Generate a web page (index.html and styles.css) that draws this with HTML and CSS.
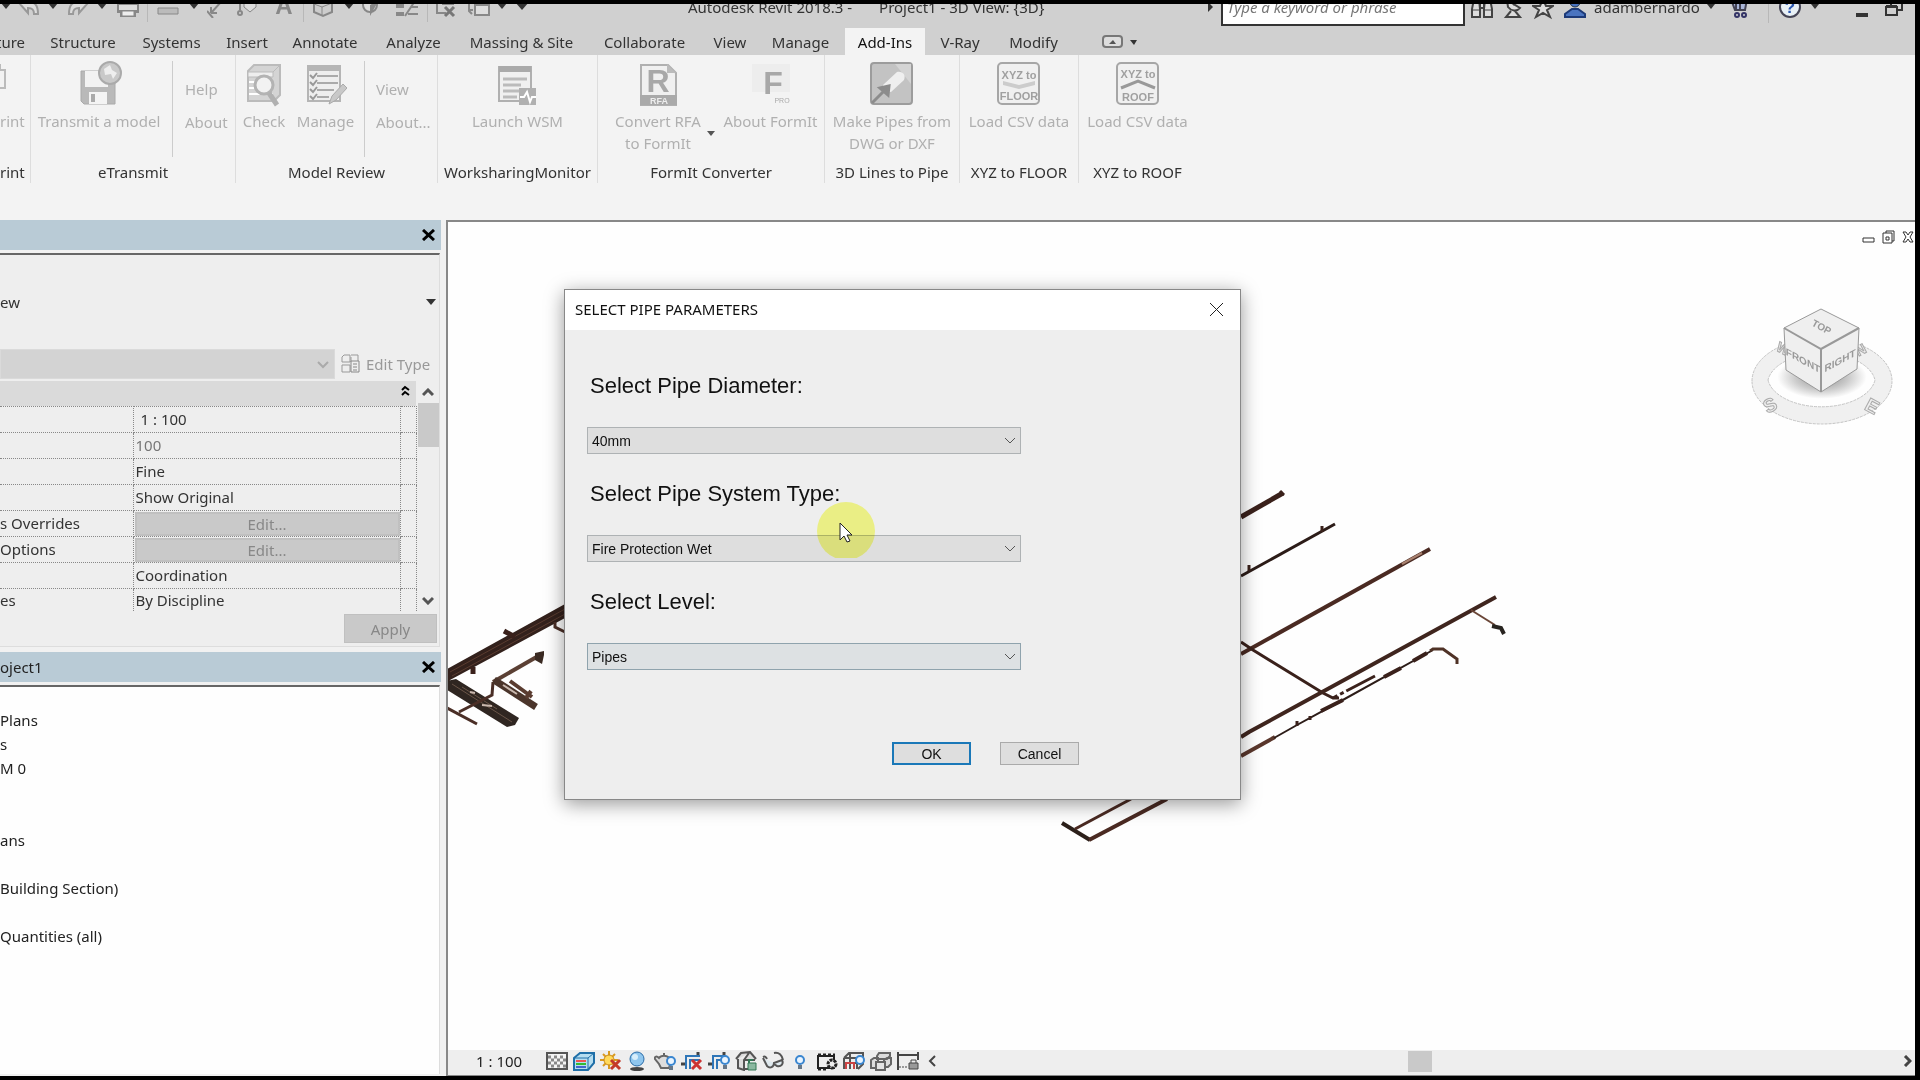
FILE: index.html
```html
<!DOCTYPE html>
<html lang="en">
<head>
<meta charset="utf-8">
<title>Autodesk Revit 2018.3 - Project1 - 3D View: {3D}</title>
<link rel="stylesheet" href="styles.css">
</head>
<body>
<div class="app">
  <header class="titlebar">
    <div class="qat">
      <button aria-label="Save options"><svg width="10" height="6"><path d="M0 0h10L5 6z" fill="#333"/></svg></button>
      <button aria-label="Undo"><svg width="22" height="20"><path d="M2 8l8-7v5c7 0 10 3 10 12h-4c0-5-2-6-6-6v5z" class="qi"/></svg></button>
      <button aria-label="Undo list"><svg width="10" height="6"><path d="M0 0h10L5 6z" fill="#333"/></svg></button>
      <button aria-label="Redo"><svg width="22" height="20"><path d="M20 8l-8-7v5c-7 0-10 3-10 12h4c0-5 2-6 6-6v5z" class="qi"/></svg></button>
      <button aria-label="Redo list"><svg width="10" height="6"><path d="M0 0h10L5 6z" fill="#333"/></svg></button>
      <button aria-label="Print"><svg width="24" height="22"><path d="M5 9V1h14v8M2 9h20v8h-3v4H5v-4H2z" fill="#ddd" stroke="#888" stroke-width="2"/><path d="M2 15h20v3H2z" fill="#888"/><path d="M6 16h12v5H6z" fill="#eee" stroke="#888"/></svg></button>
      <i class="rule"></i>
      <button aria-label="Measure"><svg width="22" height="22"><path d="M3 4h16M3 1v6M19 1v6" stroke="#888" fill="none"/><path d="M1 13h20v6H1z" fill="#bbb" stroke="#888"/></svg></button>
      <button aria-label="Measure options"><svg width="10" height="6"><path d="M0 0h10L5 6z" fill="#333"/></svg></button>
      <button aria-label="Aligned dimension"><svg width="16" height="24"><path d="M14 8L4 19M4 19v-6M4 19h6M0 17l6 7" stroke="#888" stroke-width="2" fill="none"/></svg></button>
      <button aria-label="Tag"><svg width="20" height="24"><path d="M3 8v8M3 4h5" stroke="#888" stroke-width="2"/><circle cx="3" cy="19" r="2" fill="none" stroke="#888" stroke-width="2"/><path d="M7 3h12v10l-6 5-6-5z" fill="#ddd" stroke="#888"/></svg></button>
      <button aria-label="Text" class="letter">A</button>
      <i class="rule"></i>
      <button aria-label="Default 3D view"><svg width="20" height="24"><path d="M1 9l9-6 9 6v9l-9 4-9-4z" fill="#ccc" stroke="#888" stroke-width="2"/><path d="M1 10l8 3v9M9 13l10-4" stroke="#888" fill="none"/></svg></button>
      <button aria-label="View options"><svg width="10" height="6"><path d="M0 0h10L5 6z" fill="#333"/></svg></button>
      <button aria-label="Section"><svg width="20" height="24"><circle cx="9" cy="11" r="7" fill="#ddd" stroke="#888" stroke-width="2"/><path d="M9 22V11l9-5z" fill="#888"/></svg></button>
      <button aria-label="Thin lines"><svg width="24" height="24"><path d="M1 10h8v4H1zM1 18h8v4H1z" fill="#888"/><path d="M10 22L20 7M16 13h7M13 20h10" stroke="#888" stroke-width="2"/></svg></button>
      <i class="rule"></i>
      <button aria-label="Close hidden windows"><svg width="22" height="24"><path d="M1 5h14M3 5v14h9M8 10h12" stroke="#888" stroke-width="2" fill="none"/><path d="M11 13l9 9M20 13l-9 9" stroke="#777" stroke-width="3"/></svg></button>
      <button aria-label="Switch windows"><svg width="24" height="24"><path d="M8 11h14v10H8z" fill="#ddd" stroke="#888" stroke-width="2"/><path d="M2 6v11l3 3M1 16h5" stroke="#888" stroke-width="2" fill="none"/></svg></button>
      <button aria-label="Window list"><svg width="10" height="6"><path d="M0 0h10L5 6z" fill="#333"/></svg></button>
      <button aria-label="Customize"><svg width="14" height="8"><path d="M0 0h14L7 8z" fill="#333"/></svg></button>
    </div>
    <div class="doc-title"><span>Autodesk Revit 2018.3 -</span><span>Project1 - 3D View: {3D}</span></div>
    <div class="infocenter">
      <svg width="6" height="10"><path d="M0 0v10l5-5z" fill="#333"/></svg>
      <input class="search" type="text" aria-label="Search" placeholder="Type a keyword or phrase">
      <button aria-label="Find"><svg width="24" height="26"><path d="M2 23v-8l2-10h5l1 10v8zM14 23v-8l1-10h5l2 10v8zM10 9h4v5h-4z" fill="#ddd" stroke="#444" stroke-width="2"/><path d="M3 16h6M15 16h6" stroke="#444"/></svg></button>
      <button aria-label="Subscription"><svg width="20" height="26"><path d="M4 6l13 8c-3 4-9 3-12-1zM10 11L15 5M8 17l-5 6h14l-5-6" fill="#ddd" stroke="#444" stroke-width="2"/></svg></button>
      <button aria-label="Favorites"><svg width="22" height="26"><path d="M11 5l3 7h7l-6 4 3 7-7-4-7 4 3-7-6-4h7z" fill="#ddd" stroke="#444" stroke-width="2"/></svg></button>
      <button class="user"><svg width="24" height="26"><circle cx="12" cy="8" r="5" fill="#4a74c0" stroke="#234"/><path d="M2 23v-3l7-5h6l7 5v3z" fill="#4a74c0" stroke="#1d3a78" stroke-width="2"/></svg>adambernardo<svg width="8" height="5"><path d="M0 0h8L4 5z" fill="#333"/></svg></button>
      <button aria-label="App store" class="cart"><svg width="20" height="26"><path d="M19 5h-3l-2 11H4L1 8h14M5 8v8M9 8v8" fill="#aab6d8" stroke="#445" stroke-width="2"/><circle cx="6" cy="21" r="2" fill="none" stroke="#336" stroke-width="2"/><circle cx="13" cy="21" r="2" fill="none" stroke="#336" stroke-width="2"/></svg></button>
      <i class="rule"></i>
      <button aria-label="Help" class="help"><svg width="24" height="24"><circle cx="12" cy="12" r="10" fill="#e8f0f6" stroke="#445" stroke-width="2"/><text x="12" y="18" text-anchor="middle" class="q">?</text></svg></button>
      <button aria-label="Help options"><svg width="8" height="5"><path d="M0 0h8L4 5z" fill="#333"/></svg></button>
      <button aria-label="Minimize" class="min"><svg width="12" height="20"><path d="M0 16h12v4H0z" fill="#333"/></svg></button>
      <button aria-label="Restore"><svg width="18" height="20"><path d="M1 10h11v8H1zM1 9h11M6 8V5h11v8h-4" fill="none" stroke="#333" stroke-width="2"/></svg></button>
    </div>
  </header>

  <nav class="tabs">
    <a href="#" class="cut">ture</a><a href="#">Structure</a><a href="#">Systems</a><a href="#">Insert</a><a href="#">Annotate</a><a href="#">Analyze</a><a href="#">Massing &amp; Site</a><a href="#">Collaborate</a><a href="#">View</a><a href="#">Manage</a><a href="#" class="active">Add-Ins</a><a href="#">V-Ray</a><a href="#">Modify</a>
    <button aria-label="Collapse ribbon"><svg width="36" height="14"><rect x="1" y="1" width="19" height="11" rx="3" fill="#ddd" stroke="#777" stroke-width="2"/><path d="M7 9h7l-3-4z" fill="#555"/><path d="M28 5h7l-3 5z" fill="#333"/></svg></button>
  </nav>

  <section class="ribbon">
    <div class="panel edge"><div class="tools"><button class="tool" disabled><svg width="24" height="46"><path d="M-12 9h17v18H-12M-8 9V4h8v5" fill="#f2f2f2" stroke="#bbb" stroke-width="2"/></svg><span>rint</span></button></div><h2>rint</h2></div>

    <div class="panel"><div class="tools etransmit">
      <button class="tool" disabled><svg width="46" height="46"><path d="M5 10h34v33H8l-3-3z" fill="#b9b9b9" stroke="#aaa"/><path d="M9 10h23v16H9z" fill="#f2f2f2"/><path d="M13 31h18v12H13z" fill="#f4f4f4"/><path d="M15 33h4v8h-4z" fill="#aaa"/><circle cx="34" cy="12" r="11" fill="#c9c9c9" stroke="#aaa" stroke-width="2"/><path d="M28 8l6-4 2 5 5 3-4 6-2-5-6 1z" fill="#eee"/></svg><span>Transmit a model</span></button>
      <i class="split"></i><div class="stack"><button disabled>Help</button><button disabled>About</button></div>
    </div><h2>eTransmit</h2></div>

    <div class="panel"><div class="tools review">
      <button class="tool" disabled><svg width="36" height="46"><path d="M2 10l6-6h26v30l-6 6H2z" fill="#d4d4d4" stroke="#bbb" stroke-width="2"/><path d="M2 11h25v5H2zM27 11l6-6" fill="#eee" stroke="#bbb"/><path d="M3 21h24M3 27h24M3 33h24" stroke="#fff" stroke-width="2"/><circle cx="18" cy="24" r="9" fill="#f2f2f2" stroke="#b3b3b3" stroke-width="3"/><path d="M23 32l8 12" stroke="#b0b0b0" stroke-width="5"/></svg><span>Check</span></button>
      <button class="tool" disabled><svg width="42" height="46"><path d="M3 5h32v35H3z" fill="#eee" stroke="#b5b5b5" stroke-width="2"/><path d="M3 4h32v6H3z" fill="#b5b5b5"/><path d="M12 15h21M12 22h21M12 29h17M12 36h12" stroke="#aaa" stroke-width="2"/><path d="M5 14l3 3 4-5M5 21l3 3 4-5M5 28l3 3 4-5M5 35l3 3 4-5" stroke="#999" stroke-width="2" fill="none"/><path d="M24 43l3-8 11-12 4 4-11 12z" fill="#c8c8c8" stroke="#aaa"/></svg><span>Manage</span></button>
      <i class="split"></i><div class="stack"><button disabled>View</button><button disabled>About...</button></div>
    </div><h2>Model Review</h2></div>

    <div class="panel"><div class="tools">
      <button class="tool" disabled><svg width="40" height="46"><path d="M2 6h32v34H2z" fill="#f0f0f0" stroke="#b0b0b0" stroke-width="2"/><path d="M2 5h32v6H2z" fill="#aaa"/><path d="M6 18h24M6 24h18M6 30h21M6 36h14" stroke="#bbb" stroke-width="3"/><path d="M22 27h17v17H22z" fill="#b0b0b0"/><path d="M23 36h4l3-5 3 10 2-5h4" stroke="#fff" stroke-width="2" fill="none"/></svg><span>Launch WSM</span></button>
    </div><h2>WorksharingMonitor</h2></div>

    <div class="panel"><div class="tools formit">
      <button class="tool" disabled><svg width="38" height="46"><path d="M2 4h27l8 8v32H2z" fill="#f0f0f0" stroke="#b0b0b0" stroke-width="2"/><path d="M28 3v9h9z" fill="#bbb"/><path d="M1 34h37v10H1z" fill="#aaa"/><text x="19" y="31" text-anchor="middle" class="big">R</text><text x="20" y="43" text-anchor="middle" class="tag">RFA</text></svg><span>Convert RFA<br>to FormIt</span></button>
      <svg class="drop" width="8" height="5"><path d="M0 0h8L4 5z" fill="#555"/></svg>
      <button class="tool" disabled><svg width="40" height="46"><path d="M1 3h38v28H1z" fill="#ededed"/><text x="22" y="33" text-anchor="middle" class="big">F</text><text x="31" y="42" text-anchor="middle" class="pro">PRO</text></svg><span>About FormIt</span></button>
    </div><h2>FormIt Converter</h2></div>

    <div class="panel"><div class="tools">
      <button class="tool" disabled><svg width="46" height="46"><rect x="2" y="2" width="41" height="41" rx="3" fill="#c3c3c3" stroke="#9c9c9c" stroke-width="2"/><path d="M26 3h16v20z" fill="#d4d4d4"/><path d="M14 24l14-13c6-1 9 3 7 8L22 31c-5 0-8-3-8-7z" fill="#efefef"/><path d="M3 42l16-16M11 27l9-2-1 9z" stroke="#8c8c8c" stroke-width="3" fill="#8c8c8c"/></svg><span>Make Pipes from<br>DWG or DXF</span></button>
    </div><h2>3D Lines to Pipe</h2></div>

    <div class="panel"><div class="tools">
      <button class="tool" disabled><svg width="46" height="46"><rect x="2" y="2" width="41" height="41" rx="4" fill="#f0f0f0" stroke="#a6a6a6" stroke-width="2"/><text x="23" y="18" text-anchor="middle" class="xyz">XYZ to</text><path d="M7 20l16 4 16-4v4l-16 4-16-4z" fill="#ccc"/><text x="23" y="39" text-anchor="middle" class="xyz">FLOOR</text></svg><span>Load CSV data</span></button>
    </div><h2>XYZ to FLOOR</h2></div>

    <div class="panel last"><div class="tools">
      <button class="tool" disabled><svg width="46" height="46"><rect x="2" y="2" width="41" height="41" rx="4" fill="#f0f0f0" stroke="#a6a6a6" stroke-width="2"/><text x="23" y="17" text-anchor="middle" class="xyz">XYZ to</text><path d="M6 27l17-7 17 7" fill="none" stroke="#999" stroke-width="3"/><text x="23" y="40" text-anchor="middle" class="xyz">ROOF</text></svg><span>Load CSV data</span></button>
    </div><h2>XYZ to ROOF</h2></div>
  </section>

  <main class="work">
    <aside class="docks">
      <section class="dock properties">
        <header class="dock-head"><span></span><button aria-label="Close properties"><svg width="13" height="12"><path d="M1 1l11 10M12 1L1 11" stroke="#000" stroke-width="3"/></svg></button></header>
        <div class="dock-body">
          <button class="type">ew<svg width="10" height="6"><path d="M0 0h10L5 6z" fill="#333"/></svg></button>
          <div class="type-row">
            <div class="combo"><select disabled aria-label="View type"><option></option></select><svg width="12" height="8"><path d="M1 1l5 5 5-5" fill="none" stroke="#aaa" stroke-width="2"/></svg></div>
            <button class="edit-type" disabled><svg width="19" height="20"><path d="M1 3l2-2h6v7H1zM1 11h8v7H1zM10 1h7v7M10 8V3" fill="none" stroke="#999"/><path d="M10 7h8v11h-8z" fill="#eee" stroke="#888"/><path d="M12 10h4M12 13h4M12 16h4" stroke="#888"/></svg>Edit Type</button>
          </div>
          <div class="grid-wrap">
            <table class="props">
              <colgroup><col class="c-name"><col class="c-value"><col class="c-link"></colgroup>
              <thead><tr><th colspan="3"><button aria-label="Collapse group"><svg width="9" height="12"><path d="M1 5l3-3 4 3M1 10l3-3 4 3" fill="none" stroke="#000" stroke-width="2"/></svg></button></th></tr></thead>
              <tbody>
                <tr><td></td><td class="scale">1 : 100</td><td></td></tr>
                <tr><td></td><td class="dim">100</td><td></td></tr>
                <tr><td></td><td>Fine</td><td></td></tr>
                <tr><td></td><td>Show Original</td><td></td></tr>
                <tr><td>s Overrides</td><td class="act"><button disabled>Edit...</button></td><td></td></tr>
                <tr><td>Options</td><td class="act"><button disabled>Edit...</button></td><td></td></tr>
                <tr><td></td><td>Coordination</td><td></td></tr>
                <tr><td>es</td><td>By Discipline</td><td></td></tr>
              </tbody>
            </table>
            <div class="vscroll">
              <button aria-label="Scroll up"><svg width="12" height="9"><path d="M1 7l5-5 5 5" fill="none" stroke="#555" stroke-width="3"/></svg></button>
              <i></i>
              <button aria-label="Scroll down"><svg width="12" height="9"><path d="M1 2l5 5 5-5" fill="none" stroke="#555" stroke-width="3"/></svg></button>
            </div>
          </div>
          <div class="apply-row"><button disabled>Apply</button></div>
        </div>
      </section>
      <section class="dock browser">
        <header class="dock-head"><span>oject1</span><button aria-label="Close browser"><svg width="13" height="12"><path d="M1 1l11 10M12 1L1 11" stroke="#000" stroke-width="3"/></svg></button></header>
        <ul class="tree"><li>Plans</li><li>s</li><li>M 0</li><li></li><li></li><li>ans</li><li></li><li>Building Section)</li><li></li><li>Quantities (all)</li></ul>
      </section>
    </aside>

    <section class="view">
      <div class="canvas">
        <svg class="model" viewBox="448 222 1467 828" preserveAspectRatio="xMinYMin meet" fill="none" stroke="#3a211b">
          <path d="M447 669l118-65v14l-115 62-3 10z" fill="#33211c" stroke="none"/>
          <path d="M450 672l115-63M452 676l113-62" stroke="#5a3c30"/>
          <path d="M447 681l9-2 63 39-4 7-8 2-60-37z" fill="#2f2621" stroke="none"/>
          <path d="M452 684l60 38M462 687l35 22" stroke="#6a5548"/>
          <path d="M504 631l11 6M473 667v7" stroke-width="5"/>
          <path d="M555 622v5l10 5M447 708l30 16M459 712l33-17 1-13" stroke-width="3" stroke="#4a2e26"/>
          <path d="M493 682l47-27" stroke-width="4" stroke="#5b4034"/>
          <path d="M535 653l9-2v4l-2 9-7-4z" fill="#3a2a22" stroke="none"/>
          <path d="M494 680l42 27" stroke-width="7" stroke="#4b352b"/>
          <path d="M510 681l22 16M526 698l5-7" stroke-width="4" stroke="#5a3c30"/>
          <path d="M482 705l10 1M503 685l14 9M470 692l5 1" stroke-width="2" stroke="#c9b8ae"/>
          <path d="M1241 517l42-24" stroke-width="5"/><path d="M1280 491l4 4" stroke-width="3"/>
          <path d="M1241 576l94-52" stroke-width="3" stroke="#2c1c18"/><path d="M1322 526v6M1249 565v6" stroke-width="3"/>
          <path d="M1241 654l189-105" stroke-width="4" stroke="#4a2a22"/><path d="M1402 564l20-11" stroke="#a98270" stroke-width="2"/>
          <path d="M1241 642l12 8 70 43 10 5h6" stroke-width="3"/>
          <path d="M1241 737l8-5 247-135" stroke-width="4" stroke="#3f251e"/>
          <path d="M1471 610l24 15" stroke-width="2" stroke="#6a4637"/><path d="M1492 626l9 2 3 6" stroke-width="4" stroke="#282420"/>
          <path d="M1241 756l34-19" stroke-width="4" stroke="#5a372c"/>
          <path d="M1274 738l23-13 44-24 92-51" stroke-width="2" stroke="#2c1c18"/>
          <path d="M1321 711l22-11M1384 677l17-9M1413 661l14-8" stroke-width="4"/>
          <path d="M1297 721v5M1310 716v4" stroke-width="3"/>
          <path d="M1430 651l3-2h10l14 10v5" stroke-width="3" stroke="#4f3226"/>
          <path d="M1333 698l42-22" stroke-width="3" stroke-dasharray="5 3 4 3 40"/>
          <path d="M1062 823l28 17" stroke-width="4" stroke="#2c201a"/>
          <path d="M1089 840l78-41" stroke-width="4" stroke="#4a2a22"/>
          <path d="M1075 829l56-30" stroke-width="3" stroke="#4a2a22"/>
        </svg>
        <svg class="viewcube" width="150" height="130" viewBox="1748 300 150 130">
          <defs><radialGradient id="sh"><stop offset="0" stop-color="#888"/><stop offset=".6" stop-color="#ccc"/><stop offset="1" stop-color="#fff"/></radialGradient></defs>
          <path d="M1752 381a70 43 0 0 1 140 0a70 43 0 0 1-140 0zM1768 380a54 31 0 0 0 107 0a54 31 0 0 0-107 0z" fill="#f0f0f0" stroke="#c4c4c4" stroke-dasharray="3 1" fill-rule="evenodd"/>
          <ellipse cx="1822" cy="377" rx="45" ry="22" fill="url(#sh)"/>
          <g class="compass" text-anchor="middle"><text transform="translate(1781 353) rotate(28)">W</text><text transform="translate(1863 354) rotate(-28)">N</text><text class="near" transform="translate(1773 411) rotate(-28)">S</text><text class="near" transform="translate(1869 412) rotate(28)">E</text></g>
          <path d="M1784 328l37-19 38 19-2 41-36 23-35-22z" fill="#efefef" stroke="#999" stroke-width="1"/>
          <path d="M1784 328l37 21 38-21M1821 349v43" fill="none" stroke="#999" stroke-width="2"/>
          <g class="face" text-anchor="middle"><text transform="translate(1820 330) rotate(28)">TOP</text><text class="side" transform="translate(1803 364) skewY(28)">FRONT</text><text class="side" transform="translate(1840 364) skewY(-28)">RIGHT</text></g>
        </svg>
        <div class="mdi">
          <button aria-label="Minimize view"><svg width="13" height="14"><path d="M1 8h11v4H1z" fill="#fff" stroke="#333"/></svg></button>
          <button aria-label="Restore view"><svg width="13" height="14"><path d="M4 3V1h8v10h-2M1 3h9v10H1zM4 7h3v3H4z" fill="#fff" stroke="#333"/></svg></button>
          <button aria-label="Close view"><svg width="12" height="14"><path d="M1 2h3l2 3 2-3h3L8 7l3 5H8L6 9l-2 3H1l3-5z" fill="#fff" stroke="#333"/></svg></button>
        </div>
      </div>
      <footer class="viewbar">
        <button class="vscale">1 : 100</button>
        <div class="vtools">
          <button aria-label="Detail level"><svg width="22" height="20"><path d="M1 2h20v16H1z" fill="#f4f4f4" stroke="#555" stroke-width="2"/><path d="M2 6h18M2 12h18" stroke="#888" stroke-width="3" stroke-dasharray="3 3"/><path d="M5 9h15M5 15h15" stroke="#888" stroke-width="3" stroke-dasharray="3 3"/></svg></button>
          <button aria-label="Visual style"><svg width="22" height="20"><path d="M1 7l6-5h14v10l-6 7H1z" fill="#b5ddf0" stroke="#1f6fa8" stroke-width="2"/><path d="M1 7h14l6-5M15 7v12" stroke="#1f6fa8" fill="none"/><path d="M3 10h10" stroke="#e55" stroke-width="2"/><path d="M3 13h10" stroke="#3b3" stroke-width="2"/><path d="M3 16h10" stroke="#46c" stroke-width="2"/></svg></button>
          <button aria-label="Sun path"><svg width="22" height="20"><path d="M9 0v18M0 9h18M3 3l12 12M15 3L3 15" stroke="#d99a20" stroke-width="2"/><circle cx="9" cy="9" r="5" fill="#ffd95a" stroke="#c98a18"/><path d="M11 9l9 9M20 9l-9 9" stroke="#c33a2a" stroke-width="3"/></svg></button>
          <button aria-label="Shadows"><svg width="22" height="20"><ellipse cx="10" cy="18" rx="7" ry="2" fill="#444"/><circle cx="10" cy="8" r="7" fill="#8fc6ee" stroke="#2a6ca8"/><circle cx="8" cy="6" r="3" fill="#d8eefb"/></svg></button>
          <button aria-label="Rendering"><svg width="22" height="20"><path d="M5 7c2-3 8-3 10 0l2 3-2 7H7L5 13 1 8c-1-3 2-3 4-1zM10 4V2" fill="#ddd" stroke="#666" stroke-width="2"/><circle cx="17" cy="10" r="4" fill="#eaf5ff" stroke="#3a86d0" stroke-width="2"/><path d="M15 15h4v4h-4z" fill="#678"/></svg></button>
          <button aria-label="Crop view"><svg width="22" height="20"><path d="M0 13h5M17 1v4" stroke="#444" stroke-width="3"/><path d="M5 18V5h14M9 18V9h10" stroke="#2f76b8" stroke-width="2" fill="none"/><path d="M11 9l9 9M20 9l-9 9" stroke="#c33" stroke-width="3"/></svg></button>
          <button aria-label="Show crop region"><svg width="22" height="20"><path d="M0 13h5M16 1v4" stroke="#444" stroke-width="3"/><path d="M5 18V5h12M9 18V9h5" stroke="#2f76b8" stroke-width="2" fill="none"/><circle cx="17" cy="9" r="4" fill="#eaf5ff" stroke="#3a86d0" stroke-width="2"/><path d="M15 14h4v4h-4z" fill="#678"/></svg></button>
          <button aria-label="Lock 3D view"><svg width="22" height="20"><path d="M1 8l5-6 9-1 6 7M3 8v9l6 2V9l5-7" fill="#ddd" stroke="#555" stroke-width="2"/><path d="M9 9h11M9 18h4" stroke="#555" stroke-width="2"/><path d="M13 12h8v7h-8z" fill="#8ab8a0" stroke="#375"/><path d="M14 12V9h4" fill="none" stroke="#375" stroke-width="2"/></svg></button>
          <button aria-label="Temporary hide"><svg width="22" height="20"><path d="M1 6c2-1 3 0 4 2M12 2c5-1 8 2 9 7" fill="none" stroke="#555" stroke-width="2"/><path d="M1 7l4 8c3 3 7 1 7-3l8-3c2 4-1 7-5 6-2-1-3-2-3-3" fill="#dfe9ee" stroke="#555" stroke-width="2"/></svg></button>
          <button aria-label="Reveal hidden"><svg width="22" height="20"><circle cx="11" cy="9" r="4" fill="#eaf5ff" stroke="#3a86d0" stroke-width="2"/><path d="M9 14h4v4H9z" fill="#678"/></svg></button>
          <button aria-label="Worksharing display"><svg width="22" height="20"><path d="M2 5h16v12H2z" fill="#eee" stroke="#222" stroke-width="2"/><path d="M2 4h17M2 18h10" stroke="#222" stroke-width="3" stroke-dasharray="3 2"/><circle cx="16" cy="13" r="4" fill="#eee" stroke="#222" stroke-width="3" stroke-dasharray="3 1"/></svg></button>
          <button aria-label="Analytical model"><svg width="22" height="20"><path d="M1 7l5-5h14v11l-5 5M1 7h13v11M1 7v11M1 12h13l6-5M7 2v16" stroke="#555" stroke-width="2" fill="none"/><path d="M3 18v-6h8v6" stroke="#c44" stroke-width="2" fill="none"/><circle cx="17" cy="9" r="4" fill="#eaf5ff" stroke="#3a86d0" stroke-width="2"/></svg></button>
          <button aria-label="Displacement sets"><svg width="22" height="20"><path d="M9 2l-2 3v3h10l3-3V2zM1 9l3-2h4v10H1zM14 9l3-2h4v6l-3 3h-4z" fill="#ddd" stroke="#666" stroke-width="2"/><path d="M6 11h9v8H6z" fill="#e4e4e4" stroke="#666" stroke-width="2"/></svg></button>
          <button aria-label="Reveal constraints"><svg width="22" height="20"><path d="M1 1v18M21 1v8M1 4h20" stroke="#444" stroke-width="2"/><path d="M2 16h9" stroke="#444" stroke-dasharray="2 1"/><path d="M12 12h9v6h-9z" fill="#999" stroke="#444"/><path d="M14 12V9h5v3" fill="none" stroke="#444"/></svg></button>
        </div>
        <div class="hscroll">
          <button aria-label="Scroll left"><svg width="9" height="12"><path d="M7 1L2 6l5 5" fill="none" stroke="#444" stroke-width="2"/></svg></button>
          <i></i>
          <button aria-label="Scroll right"><svg width="9" height="12"><path d="M2 1l5 5-5 5" fill="none" stroke="#444" stroke-width="3"/></svg></button>
        </div>
      </footer>
    </section>
  </main>

  <form class="dialog" role="dialog" aria-labelledby="dlg">
    <header><h1 id="dlg">SELECT PIPE PARAMETERS</h1><button type="button" aria-label="Close"><svg width="15" height="15"><path d="M1 1l13 13M14 1L1 14" stroke="#222"/></svg></button></header>
    <div class="fields">
      <label for="dia">Select Pipe Diameter:</label>
      <div class="pick"><select id="dia"><option>40mm</option></select><svg width="12" height="8"><path d="M1 1l5 5 5-5" fill="none" stroke="#555"/></svg></div>
      <label for="sys">Select Pipe System Type:</label>
      <div class="pick"><select id="sys"><option>Fire Protection Wet</option></select><svg width="12" height="8"><path d="M1 1l5 5 5-5" fill="none" stroke="#555"/></svg></div>
      <label for="lvl">Select Level:</label>
      <div class="pick hot"><select id="lvl"><option>Pipes</option></select><svg width="12" height="8"><path d="M1 1l5 5 5-5" fill="none" stroke="#555"/></svg></div>
    </div>
    <div class="actions"><button type="button" class="ok">OK</button><button type="button">Cancel</button></div>
    <svg class="halo" width="60" height="57"><circle cx="30" cy="30" r="29" fill="#fbff8e"/></svg>
    <svg class="pointer" width="14" height="21"><path d="M1 1v17l4-4 3 6 3-1-3-6h5z" fill="#fff" stroke="#222"/></svg>
  </form>
</div>
</body>
</html>
```
FILE: styles.css
```css
* { box-sizing: border-box; }
body { margin: 0; background: #000; font: 15px/22px "Noto Sans", "Open Sans", sans-serif; color: #333; }
button { font: inherit; color: inherit; background: none; border: 0; padding: 0; margin: 0; display: flex; align-items: center; justify-content: center; }
svg { flex: none; display: block; }
h1, h2, ul { margin: 0; padding: 0; font: inherit; }
i { display: block; }

.app { position: relative; height: 100vh; border: solid #000; border-width: 4px 5px 4px 0; background: #f1f1f1; display: flex; flex-direction: column; overflow: hidden; }

/* title bar */
.titlebar { height: 24px; flex: none; background: #d0d0d0; display: flex; align-items: flex-end; overflow: hidden; }
.titlebar > div { height: 43px; flex: none; display: flex; align-items: center; }
.titlebar .qat { width: 688px; height: 44px; display: grid; grid-template-columns: 12px 34px 14px 35px 14px 38px 1px 39px 14px 28px 36px 38px 1px 38px 14px 30px 41px 1px 34px 33px 14px 26px; }
.qi { fill: #ddd; stroke: #999; stroke-width: 2; }
.rule { width: 1px; height: 32px; background: #b8b8b8; }
.letter { font: bold 24px/28px "Liberation Sans", sans-serif; color: #888; }
.doc-title { gap: 27px; width: 520px; white-space: pre; }
.titlebar .infocenter { flex: 1 1 auto; gap: 9px; }
.search { width: 244px; height: 38px; margin-left: -2px; margin-right: -4px; border: 2px solid #333; background: #fff; padding: 0 4px; font: italic 15px/22px "Noto Sans", sans-serif; border-radius: 0; }
.search::placeholder { color: #777; }
.user { gap: 7px; margin-right: 7px; }
.cart { margin-right: 8px; }
.q { font: bold 17px "Liberation Sans", sans-serif; fill: #2a56b0; }
.min { margin-left: 28px; margin-right: 8px; }

/* tabs */
.tabs { flex: none; height: 27px; background: #d0d0d0; display: grid; grid-template-columns: 36px 94px 83px 68px 88px 89px 127px 119px 52px 89px 80px 70px 77px 96px; }
.tabs a { color: #333; text-decoration: none; text-align: center; line-height: 28px; white-space: nowrap; }
.tabs a.cut { text-align: left; margin-left: -4px; }
.tabs a.active { background: #f3f3f3; color: #111; }

/* ribbon */
.ribbon { flex: none; height: 165px; background: #f3f3f3; display: grid; grid-template-columns: 31px 205px 202px 160px 227px 135px 119px 117px; align-items: start; }
.panel { border-right: 1px solid #ddd; height: 128px; display: flex; flex-direction: column; white-space: nowrap; }
.panel.last { border: 0; }
.panel h2 { text-align: center; color: #333; }
.panel.edge h2, .panel.edge .tool { text-align: left; align-items: flex-start; }
.panel.edge .tools { justify-content: flex-start; }
.tools { height: 106px; padding-top: 6px; display: flex; justify-content: center; color: #b0b0b0; }
.tool { flex-direction: column; justify-content: flex-start; gap: 3px; line-height: 22px; color: #b0b0b0; }
.tools.etransmit { display: grid; grid-template-columns: 136px 6px 1fr; justify-content: start; }
.tools.review { display: grid; grid-template-columns: 56px 67px 5px 1fr; justify-content: start; }
.split { width: 1px; height: 96px; background: #ccc; margin-left: 5px; }
.stack { padding: 11px 0 0 12px; }
.stack button { height: 33px; justify-content: flex-start; color: #b0b0b0; }
.tools.formit { display: grid; grid-template-columns: 90px 16px 103px; justify-content: start; padding-left: 15px; }
.drop { margin-top: 70px; justify-self: center; }
.big { font: bold 32px "Liberation Sans", sans-serif; fill: #a8a8a8; }
.tag { font: bold 9px "Liberation Sans", sans-serif; fill: #eee; }
.pro { font: 7px "Liberation Sans", sans-serif; fill: #aaa; }
.xyz { font: bold 11px "Liberation Sans", sans-serif; fill: #a0a0a0; }

/* docked palettes */
.work { flex: 1; min-height: 0; display: flex; gap: 5px; }
.docks { width: 441px; flex: none; display: flex; flex-direction: column; gap: 5px; }
.dock-head { height: 30px; background: #b9cbd6; display: flex; align-items: center; justify-content: space-between; padding-right: 6px; margin-bottom: 3px; }
.dock-head span { line-height: 30px; }
.dock-body { border: solid #ddd; border-width: 0 1px 1px 0; border-top: 2px solid #666; margin-right: 1px; background: #eee; }
.type { width: 100%; height: 94px; justify-content: space-between; padding: 0 3px 0 0; }
.type-row { display: flex; height: 30px; gap: 6px; margin-bottom: 2px; }
.combo { position: relative; width: 335px; }
.combo select { appearance: none; width: 100%; height: 30px; background: #c9c9c9; border: 1px solid #d2d2d2; border-radius: 0; }
.combo svg, .pick svg { position: absolute; right: 6px; top: 12px; pointer-events: none; }
.edit-type { gap: 6px; color: #999; }
.grid-wrap { display: flex; gap: 1px; height: 230px; overflow: hidden; }
.props { width: 416px; table-layout: fixed; border-collapse: collapse; }
.c-name { width: 133px; }
.c-value { width: 267px; }
.c-link { width: 16px; }
.props th { height: 25px; padding: 0; background: #dadada; }
.props th button { margin-left: auto; margin-right: 6px; margin-bottom: 4px; }
.props td { height: 26px; padding: 0 0 0 2px; border: 1px dotted #888; line-height: 22px; white-space: nowrap; }
.props td:first-child { border-left: 0; padding-left: 0; }
.props tr:last-child td { border-bottom: 0; height: 23px; }
.props .scale { padding-left: 7px; }
.props .dim { color: #777; }
.props .act { padding: 1px 0 0 1px; }
.act button { width: 100%; height: 24px; background: #c9c9c9; border: 2px solid #c0c0c0; color: #888; }
.vscroll { width: 21px; display: flex; flex-direction: column; }
.vscroll button { height: 22px; }
.vscroll i { height: 44px; background: #c9c9c9; margin-bottom: auto; }
.apply-row { display: flex; justify-content: flex-end; padding: 3px 2px 3px; }
.apply-row button { width: 93px; height: 29px; background: #c9c9c9; border: 1px solid #c0c0c0; color: #888; }
.browser { flex: 1; display: flex; flex-direction: column; color: #222; }
.tree { flex: 1; background: #fefefe; border-top: 2px solid #666; border-right: 1px solid #ddd; margin-right: 1px; margin-bottom: 2px; padding: 21px 0 0; list-style: none; }
.tree li { height: 24px; line-height: 24px; white-space: nowrap; }

/* 3D view */
.view { flex: 1; min-width: 0; border: solid #888; border-width: 2px 0 1px 2px; display: flex; flex-direction: column; }
.canvas { flex: 1; min-height: 0; position: relative; background: #fefefe; overflow: hidden; }
.model { position: absolute; inset: 0; width: 100%; height: 100%; }
.viewcube { position: absolute; right: 17px; top: 78px; }
.face { font: bold 10px "Liberation Sans", sans-serif; fill: #999; }
.compass { font: bold 14px "Liberation Sans", sans-serif; fill: #eee; stroke: #aaa; }
.compass .near { font-size: 19px; }
.mdi { position: absolute; right: 1px; top: 8px; display: flex; gap: 7px; }
.viewbar { flex: none; height: 25px; background: #eee; display: flex; padding-bottom: 3px; }
.vscale { width: 98px; padding-left: 28px; justify-content: flex-start; color: #222; }
.vtools { display: flex; gap: 5px; }
.hscroll { flex: 1; display: flex; align-items: center; justify-content: space-between; padding: 0 3px 0 9px; }
.hscroll i { width: 24px; height: 21px; background: #c9c9c9; }

/* pipe parameter dialog */
.dialog { position: absolute; left: 564px; top: 285px; width: 677px; height: 511px; background: #eee; border: 1px solid #888; box-shadow: 0 4px 18px rgba(0,0,0,.4); font-family: "Liberation Sans", Arial, sans-serif; color: #111; }
.dialog header { height: 40px; background: #fff; display: flex; align-items: center; justify-content: space-between; padding: 0 16px 2px 10px; font: 15px/22px "Noto Sans", sans-serif; }
.fields { padding: 41px 0 0 22px; }
.fields label { display: block; font-size: 22px; line-height: 30px; margin-left: 3px; }
.pick { position: relative; width: 434px; height: 27px; margin: 26px 0 25px; }
.pick svg { top: 10px; right: 5px; }
.pick select { appearance: none; display: block; width: 100%; height: 27px; border: 1px solid #aeb2b4; border-radius: 0; background: #dedede; color: #111; font: 14px/20px "Liberation Sans", Arial, sans-serif; padding: 0 4px; }
.pick.hot select { background: #dde1e3; border-color: #8fa3ad; }
.actions { display: flex; gap: 29px; padding: 47px 0 0 327px; }
.actions button { width: 79px; height: 23px; background: #dedede; border: 1px solid #aaa; font-size: 14px; }
.actions .ok { border: 2px solid #1a78b8; }
.halo { position: absolute; left: 251px; top: 211px; mix-blend-mode: multiply; pointer-events: none; }
.pointer { position: absolute; left: 274px; top: 232px; pointer-events: none; }
```
